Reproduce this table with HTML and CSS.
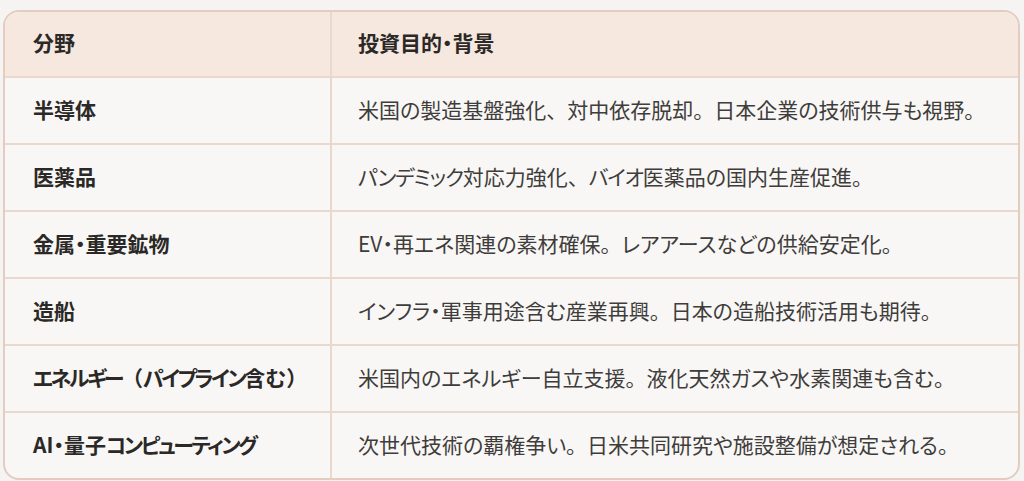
FILE: index.html
```html
<!DOCTYPE html>
<html lang="ja">
<head>
<meta charset="utf-8">
<link rel="stylesheet" href="styles.css">
</head>
<body>
<div class="page">
  <div class="table">
    <div class="row head">
      <div class="cell c1">分野</div>
      <div class="cell c2">投資目的・背景</div>
    </div>
    <div class="row">
      <div class="cell c1">半導体</div>
      <div class="cell c2">米国の製造基盤強化<span class="fw">、</span>対中依存脱却<span class="fw">。</span>日本企業の技術供与も視野<span class="fw">。</span></div>
    </div>
    <div class="row">
      <div class="cell c1">医薬品</div>
      <div class="cell c2"><span class="kn">パンデミック</span>対応力強化<span class="fw">、</span><span class="kn">バイオ</span>医薬品の国内生産促進<span class="fw">。</span></div>
    </div>
    <div class="row">
      <div class="cell c1">金属・重要鉱物</div>
      <div class="cell c2">EV・再エネ関連の素材確保<span class="fw">。</span>レアアースなどの供給安定化<span class="fw">。</span></div>
    </div>
    <div class="row">
      <div class="cell c1">造船</div>
      <div class="cell c2">インフラ・軍事用途含む産業再興<span class="fw">。</span>日本の造船技術活用も期待<span class="fw">。</span></div>
    </div>
    <div class="row">
      <div class="cell c1"><span class="kb">エネルギー</span><span class="fw">（</span><span class="kb">パイプライン</span>含む<span class="fw">）</span></div>
      <div class="cell c2">米国内のエネルギー自立支援<span class="fw">。</span>液化天然ガスや水素関連も含む<span class="fw">。</span></div>
    </div>
    <div class="row last">
      <div class="cell c1">AI・量子<span class="kb">コンピューティング</span></div>
      <div class="cell c2">次世代技術の覇権争い<span class="fw">。</span>日米共同研究や施設整備が想定される<span class="fw">。</span></div>
    </div>
  </div>
</div>
</body>
</html>
```

FILE: styles.css
```css
html, body {
  margin: 0;
  padding: 0;
  background: #f6f4f2;
}
.page {
  padding: 10px 4px 2px 3px;
}
.table {
  border: 2px solid #e2cdc0;
  border-radius: 16px;
  overflow: hidden;
  background: #f8f7f5;
  font-family: "Noto Sans CJK JP", "Noto Sans", sans-serif;
  font-feature-settings: "palt";
  font-size: 21px;
  color: #3f3d3b;
}
.fw {
  font-feature-settings: normal;
}
.kb {
  letter-spacing: -2.5px;
}
.kn {
  letter-spacing: -1.2px;
}
.row {
  display: grid;
  grid-template-columns: 327px 1fr;
  height: 67px;
  box-sizing: border-box;
  border-bottom: 2px solid #e9d8cd;
}
.row.last {
  border-bottom: none;
  height: 65px;
}
.row.head {
  background: #f6e8de;
  height: 66px;
}
.cell {
  display: flex;
  align-items: center;
  padding-left: 28px;
  padding-bottom: 4px;
  white-space: nowrap;
}
.c2 {
  padding-left: 26px;
}
.c1 {
  border-right: 2px solid #e9d8cd;
  font-weight: 700;
  color: #2b2927;
}
.head .cell {
  font-weight: 700;
  color: #2b2927;
}
```
